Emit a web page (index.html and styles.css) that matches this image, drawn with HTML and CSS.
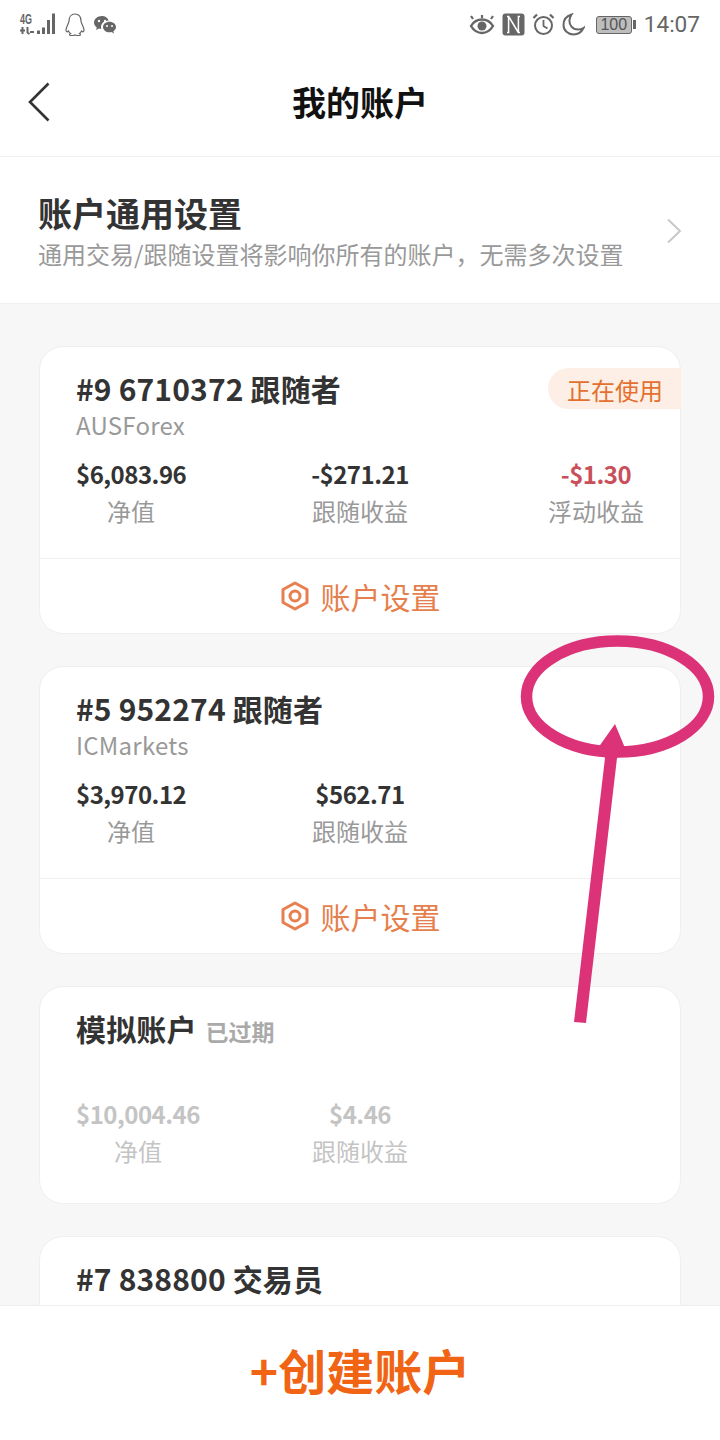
FILE: index.html
```html
<!DOCTYPE html>
<html lang="zh">
<head>
<meta charset="utf-8">
<title>我的账户</title>
<link rel="stylesheet" href="styles.css">
</head>
<body>
<div class="screen">
  <div class="status">
    <div class="status-left">
      <svg class="ic-signal" width="38" height="25" viewBox="0 0 38 25">
        <text x="1" y="11.500" class="net" textLength="12" lengthAdjust="spacingAndGlyphs">4G</text>
        <path d="M1 18.500h5M3.500 15v7M8.500 15v5.500l2 1.500M11 20h4" stroke="#666" stroke-width="2" fill="none"/>
        <path d="M18 18.500h3v3.500h-3zM23 15.500h3V22h-3zM28 8h3v14h-3zM33 1.500h3V22h-3z" fill="#666"/>
      </svg>
      <svg class="ic-qq" width="22" height="24" viewBox="0 0 22 24"><path d="M11 1c-4 0-6 3-6 7 0 2-3 6-3 9 0 2 1 2.500 2.500 1 .5 1 1 2 2 2.500-1 .5-1.500 1.500 0 2h3l1.500-.5 1.500.5h3c1.500-.5 1-1.500 0-2 1-.5 1.500-1.500 2-2.500 1.500 1.500 2.500 1 2.500-1 0-3-3-7-3-9 0-4-2-7-6-7z" fill="none" stroke="#666" stroke-width="1.200"/></svg>
      <svg class="ic-wx" width="24" height="20" viewBox="0 0 24 20"><path d="M9 1C4.600 1 1 3.900 1 7.500c0 2 1.100 3.700 2.800 4.900L3 15l3-1.500c.8.200 1.500.3 2.300.4-.2-.6-.3-1.200-.3-1.900 0-3.700 3.500-6.500 7.700-6.500C14.800 3 12.200 1 9 1z" fill="#666"/><path d="M23 12c0-3-2.900-5.300-6.500-5.300S10 9 10 12s2.900 5.300 6.500 5.300c.7 0 1.400-.1 2-.3l2.500 1.500-.6-2.300C22 15.200 23 13.700 23 12z" fill="#666"/><circle cx="6" cy="6" r="1.200" fill="#fff"/><circle cx="12" cy="6" r="1.200" fill="#fff"/><circle cx="14" cy="11" r="1" fill="#fff"/><circle cx="19" cy="11" r="1" fill="#fff"/></svg>
    </div>
    <div class="status-right">
      <svg width="26" height="22" viewBox="0 0 26 22"><path d="M2 12c3-5 7-6.500 11-6.500S21 7 24 12c-3 5-7 7-11 7s-8-2-11-7z" fill="none" stroke="#666" stroke-width="2.400"/><circle cx="13" cy="12" r="4.500" fill="#666"/><path d="M4 5 2 2M13 4V1M22 5l2-3" stroke="#666" stroke-width="2.200"/></svg>
      <svg width="23" height="23" viewBox="0 0 23 23"><rect x="0.500" y="0.500" width="22" height="22" rx="3" fill="#666"/><path d="M5 3.500h1.600v16H5M18 3.500h-1.600v16H18M7 4l9 15" fill="none" stroke="#fff" stroke-width="1.500"/></svg>
      <svg width="23" height="23" viewBox="0 0 23 23"><circle cx="11.500" cy="12.500" r="8.500" fill="none" stroke="#666" stroke-width="2"/><path d="M11.500 7v6l4 2.500" fill="none" stroke="#666" stroke-width="1.800"/><path d="M1.500 5 5 1.500M21.500 5 18 1.500" stroke="#666" stroke-width="2.200"/></svg>
      <svg width="23" height="23" viewBox="0 0 23 23"><path d="M9.500 1.500C4.500 3 1.500 7 1.500 12c0 5.500 4.500 9.500 10 9.500 4.500 0 8-2.500 10-6.500-1.500 1-3.500 1.500-5.500 1.500C10.500 16.500 7 12 7.500 7c.2-2 1-4 2-5.500z" fill="none" stroke="#666" stroke-width="2"/></svg>
      <div class="battery"><div class="battery-body">100</div><div class="battery-tip"></div></div>
      <span class="clock">14:07</span>
    </div>
  </div>

  <header class="nav">
    <svg class="back" width="24" height="40" viewBox="0 0 24 40"><path d="M21.500 1.500 3 20l18.500 18.500" fill="none" stroke="#333" stroke-width="2.600"/></svg>
    <h1 class="nav-title">我的账户</h1>
  </header>

  <section class="general">
    <div class="general-text">
      <h2 class="general-title">账户通用设置</h2>
      <p class="general-sub">通用交易/跟随设置将影响你所有的账户，无需多次设置</p>
    </div>
    <svg class="chevron" width="16" height="26" viewBox="0 0 16 26"><path d="M2 1.500 14 13 2 24.500" fill="none" stroke="#c8c8c8" stroke-width="2"/></svg>
  </section>

  <main class="list">
    <article class="card">
      <div class="card-main">
        <span class="badge">正在使用</span>
        <h3 class="card-title">#9 6710372 跟随者</h3>
        <p class="broker">AUSForex</p>
        <div class="stats">
          <div class="stat first"><b class="val">$6,083.96</b><span class="lab">净值</span></div>
          <div class="stat mid"><b class="val">-$271.21</b><span class="lab">跟随收益</span></div>
          <div class="stat last"><b class="val red">-$1.30</b><span class="lab">浮动收益</span></div>
        </div>
      </div>
      <div class="card-action">
        <svg width="30" height="32" viewBox="0 0 30 32"><path d="M15 3 27 9.500v13L15 29 3 22.500v-13z" fill="none" stroke="#e77f4f" stroke-width="3" stroke-linejoin="round"/><circle cx="15" cy="16" r="5" fill="none" stroke="#e77f4f" stroke-width="3"/></svg>
        <span>账户设置</span>
      </div>
    </article>

    <article class="card">
      <div class="card-main">
        <h3 class="card-title">#5 952274 跟随者</h3>
        <p class="broker">ICMarkets</p>
        <div class="stats">
          <div class="stat first"><b class="val">$3,970.12</b><span class="lab">净值</span></div>
          <div class="stat mid"><b class="val">$562.71</b><span class="lab">跟随收益</span></div>
        </div>
      </div>
      <div class="card-action">
        <svg width="30" height="32" viewBox="0 0 30 32"><path d="M15 3 27 9.500v13L15 29 3 22.500v-13z" fill="none" stroke="#e77f4f" stroke-width="3" stroke-linejoin="round"/><circle cx="15" cy="16" r="5" fill="none" stroke="#e77f4f" stroke-width="3"/></svg>
        <span>账户设置</span>
      </div>
    </article>

    <article class="card demo">
      <div class="card-main">
        <h3 class="card-title">模拟账户 <span class="expired">已过期</span></h3>
        <p class="broker">&nbsp;</p>
        <div class="stats">
          <div class="stat first"><b class="val">$10,004.46</b><span class="lab">净值</span></div>
          <div class="stat mid"><b class="val">$4.46</b><span class="lab">跟随收益</span></div>
        </div>
      </div>
    </article>

    <article class="card tail">
      <div class="card-main">
        <h3 class="card-title">#7 838800 交易员</h3>
      </div>
    </article>
  </main>

  <footer class="create">+创建账户</footer>

  <svg class="markup" width="720" height="1440" viewBox="0 0 720 1440">
    <ellipse cx="617.500" cy="696.500" rx="91" ry="55.500" fill="none" stroke="#dc3278" stroke-width="11.500"/>
    <path d="M574 1022 605 758 598 748 615 724 625 748 617 758 586 1023z" fill="#dc3278"/>
  </svg>
</div>
</body>
</html>
```
FILE: styles.css
```css
* { box-sizing: border-box; }
html, body { margin: 0; padding: 0; }
body { font-family: "Noto Sans CJK SC", "Noto Sans", sans-serif; background: #fff; }
h1, h2, h3, p { margin: 0; }
.screen { position: relative; width: 720px; height: 1440px; overflow: hidden; background: #f7f7f7; display: flex; flex-direction: column; }

.status { height: 56px; background: #fff; display: flex; justify-content: space-between; align-items: flex-start; padding: 12px 20px 0 19px; flex: none; }
.status-left { display: flex; align-items: center; gap: 7px; height: 25px; }
.ic-signal { overflow: visible; }
.status-left .net { font: 700 14px "Liberation Sans", sans-serif; fill: #666; }
.status-right { display: flex; align-items: center; gap: 7px; height: 25px; }
.battery { display: flex; align-items: center; margin-left: 4px; }
.battery-body { width: 36px; height: 18px; border: 1px solid #666; border-radius: 3px; background: #bdbdbd; font: 16px/16px "Liberation Sans", sans-serif; color: #555; text-align: center; }
.battery-tip { width: 3px; height: 9px; margin-left: 1px; background: #666; }
.clock { font: 22.600px/25px Roboto, sans-serif; color: #666; margin-left: 1px; }

.nav { position: relative; height: 101px; flex: none; background: #fff; border-bottom: 1px solid #f0f0f0; display: flex; align-items: center; justify-content: center; padding-bottom: 9px; }
.back { position: absolute; left: 27px; top: 26px; }
.nav-title { font-size: 34px; line-height: 46px; font-weight: 700; color: #111; }

.general { height: 147px; flex: none; background: #fff; border-bottom: 1px solid #f2f2f2; display: flex; align-items: center; justify-content: space-between; padding: 0 38px; }
.general-title { font-size: 34px; line-height: 46px; font-weight: 700; color: #333; }
.general-sub { font-size: 24px; line-height: 34px; color: #999; margin-top: 1px; }
.chevron { margin-top: 2px; }

.list { flex: 1; padding: 42px 39px 0; display: flex; flex-direction: column; gap: 32px; }
.card { flex: none; background: #fff; border: 1px solid #efefef; border-radius: 24px; }
.card-main { position: relative; padding: 20px 36px 28px; }
.card-title { font-size: 30px; line-height: 42px; font-weight: 700; color: #333; letter-spacing: .15px; }
.broker { font-size: 24px; line-height: 32px; color: #999; letter-spacing: .25px; }
.badge { position: absolute; right: -1px; top: 21px; width: 133px; height: 41px; padding-left: 19px; background: #fdefe6; border-radius: 21px 0 0 21px; font-size: 24px; line-height: 43px; color: #e4702f; }
.stats { display: grid; grid-template-columns: 1fr auto 1fr; margin-top: 15px; }
.stat { display: flex; flex-direction: column; align-items: center; }
.first { justify-self: start; }
.mid { justify-self: center; }
.last { justify-self: end; }
.val { font-size: 24px; line-height: 36px; font-weight: 700; color: #333; letter-spacing: -.5px; }
.red { color: #c9505a; }
.lab { font-size: 24px; line-height: 38px; color: #999; }
.card-action { height: 75px; border-top: 1px solid #efefef; display: flex; align-items: center; justify-content: center; gap: 11px; font-size: 30px; color: #e67f4e; }
.demo .card-main { padding-bottom: 33px; }
.demo .val, .demo .lab { color: #c4c4c4; }
.expired { font-size: 23px; line-height: 1; color: #aaa; margin-left: 2px; letter-spacing: 0; }
.tail { min-height: 200px; }

.create { position: absolute; left: 0; right: 0; bottom: 0; height: 135px; background: #fff; border-top: 1px solid #eee; text-align: center; font-size: 48px; line-height: 126px; font-weight: 700; color: #f06414; }
.markup { position: absolute; left: 0; top: 0; pointer-events: none; }
```
